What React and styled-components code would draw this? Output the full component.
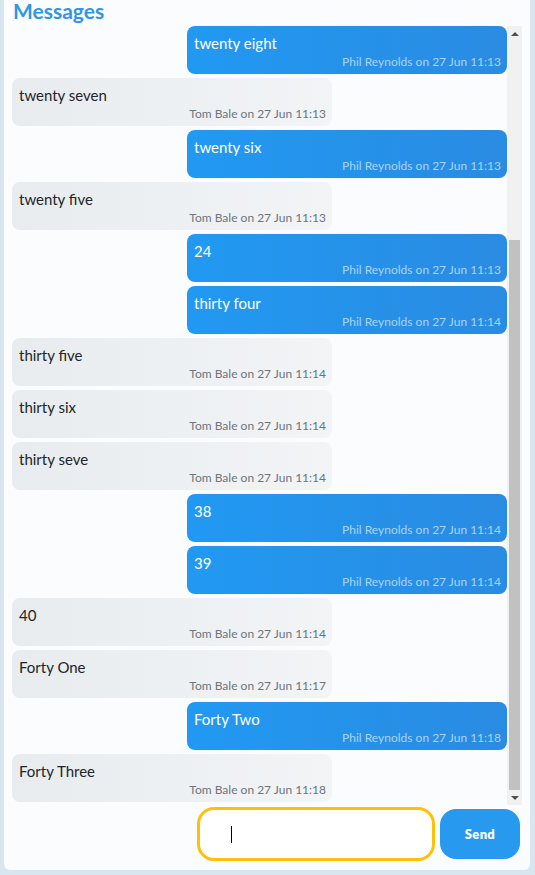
import React from 'react';
import styled, { createGlobalStyle } from 'styled-components';

const GlobalStyle = createGlobalStyle`
  html, body {
    margin: 0;
    padding: 0;
    background: #dae6ef;
    font-family: Lato, "Liberation Sans", sans-serif;
    color: #212529;
  }
  * {
    box-sizing: border-box;
  }
`;

const Card = styled.div`
  width: 526px;
  margin: 0 0 0 4px;
  height: 870px;
  background: #fafcfe;
  border-radius: 0 0 6px 6px;
  padding: 0 8px;
  display: flex;
  flex-direction: column;
`;

const Title = styled.h2`
  margin: 0;
  padding: 0 0 4px 1px;
  height: 26px;
  line-height: 22px;
  font-size: 21px;
  font-weight: 700;
  color: #2f97e6;
`;

const ListArea = styled.div`
  height: 779px;
  display: flex;
`;

const MessageList = styled.div`
  flex: 1;
  overflow: hidden;
  display: flex;
  flex-direction: column;
  justify-content: flex-end;
  gap: 4px;
  padding-bottom: 3px;
`;

const Scrollbar = styled.div`
  width: 15px;
  background: #f1f1f1;
  display: flex;
  flex-direction: column;
  align-items: center;
`;

const Arrow = styled.div`
  flex: 0 0 15px;
  width: 15px;
  display: flex;
  align-items: center;
  justify-content: center;
  &::before {
    content: '';
    border-left: 4px solid transparent;
    border-right: 4px solid transparent;
    ${(p) =>
      p.$down
        ? 'border-top: 4px solid #505050;'
        : 'border-bottom: 4px solid #505050;'}
  }
`;

const Spacer = styled.div`
  flex: 1;
`;

const Thumb = styled.div`
  flex: 0 0 550px;
  width: 11px;
  background: #c1c1c1;
`;

const Bubble = styled.div`
  flex: 0 0 48px;
  width: 320px;
  align-self: ${(p) => (p.$mine ? 'flex-end' : 'flex-start')};
  border-radius: 8px;
  padding: 7px 6px 0 7px;
  background: ${(p) =>
    p.$mine
      ? 'linear-gradient(90deg, #2199f2, #2a8be2)'
      : 'linear-gradient(90deg, #e8ecef, #f2f4f6)'};
  color: ${(p) => (p.$mine ? '#ffffff' : '#212529')};
`;

const Body = styled.div`
  font-size: 15px;
  line-height: 20px;
`;

const Meta = styled.div`
  margin-top: 1px;
  text-align: right;
  font-size: 12px;
  line-height: 16px;
  color: ${(p) => (p.$mine ? '#a9d3f7' : '#6c757d')};
`;

const Composer = styled.div`
  display: flex;
  justify-content: flex-end;
  align-items: center;
  gap: 5px;
  padding: 2px 2px 0 0;
`;

const InputWrap = styled.div`
  position: relative;
  &::after {
    content: '';
    position: absolute;
    left: 34px;
    top: 19px;
    width: 1px;
    height: 17px;
    background: #000;
  }
`;

const Input = styled.input`
  display: block;
  width: 238px;
  height: 54px;
  border: 3px solid #ffc107;
  border-radius: 17px;
  padding: 0 10px 0 32px;
  font-size: 16px;
  font-family: inherit;
  background: #ffffff;
  outline: none;
  caret-color: transparent;
`;

const SendButton = styled.button`
  width: 80px;
  height: 50px;
  border: none;
  border-radius: 16px;
  background: #2799ee;
  color: #ffffff;
  font-family: inherit;
  font-weight: 800;
  font-size: 13px;
  letter-spacing: 0.3px;
`;

const PHIL = 'Phil Reynolds';
const TOM = 'Tom Bale';

const messages = [
  { text: 'twenty eight', from: PHIL, time: '11:13' },
  { text: 'twenty seven', from: TOM, time: '11:13' },
  { text: 'twenty six', from: PHIL, time: '11:13' },
  { text: 'twenty five', from: TOM, time: '11:13' },
  { text: '24', from: PHIL, time: '11:13' },
  { text: 'thirty four', from: PHIL, time: '11:14' },
  { text: 'thirty five', from: TOM, time: '11:14' },
  { text: 'thirty six', from: TOM, time: '11:14' },
  { text: 'thirty seve', from: TOM, time: '11:14' },
  { text: '38', from: PHIL, time: '11:14' },
  { text: '39', from: PHIL, time: '11:14' },
  { text: '40', from: TOM, time: '11:14' },
  { text: 'Forty One', from: TOM, time: '11:17' },
  { text: 'Forty Two', from: PHIL, time: '11:18' },
  { text: 'Forty Three', from: TOM, time: '11:18' },
];

export default function App() {
  return (
    <>
      <GlobalStyle />
      <Card>
        <Title>Messages</Title>
        <ListArea>
          <MessageList>
            {messages.map((m, i) => {
              const mine = m.from === PHIL;
              return (
                <Bubble key={i} $mine={mine}>
                  <Body>{m.text}</Body>
                  <Meta $mine={mine}>
                    {m.from} on 27 Jun {m.time}
                  </Meta>
                </Bubble>
              );
            })}
          </MessageList>
          <Scrollbar>
            <Arrow />
            <Spacer />
            <Thumb />
            <Arrow $down />
          </Scrollbar>
        </ListArea>
        <Composer>
          <InputWrap>
            <Input type="text" />
          </InputWrap>
          <SendButton>Send</SendButton>
        </Composer>
      </Card>
    </>
  );
}
